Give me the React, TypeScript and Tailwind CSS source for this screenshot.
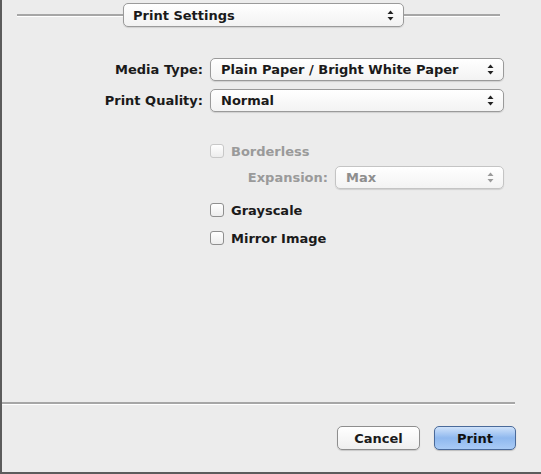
import React from "react";

const font = { fontFamily: '"DejaVu Sans", "Liberation Sans", sans-serif' };

function Arrows({ dim = false }: { dim?: boolean }) {
  const c = dim ? "#9a9a9a" : "#222";
  return (
    <svg width="7" height="11" viewBox="0 0 7 11" className="shrink-0">
      <path d="M3.5 0.5 L6.5 4 L0.5 4 Z" fill={c} />
      <path d="M3.5 10.5 L6.5 7 L0.5 7 Z" fill={c} />
    </svg>
  );
}

function Popup({
  label,
  w,
  dim = false,
}: {
  label: string;
  w: string;
  dim?: boolean;
}) {
  return (
    <div
      className={`${w} h-[23px] flex items-center justify-between pl-[10px] pr-[9px] rounded-[5px] border bg-gradient-to-b from-white to-[#f3f3f3] shadow-[0_1px_1px_rgba(0,0,0,0.12)] ${
        dim ? "border-[#c4c4c4] text-[#8e8e8e]" : "border-[#9a9a9a] text-[#1a1a1a]"
      }`}
    >
      <span className="text-[13px] font-bold leading-none">{label}</span>
      <Arrows dim={dim} />
    </div>
  );
}

function Check({ label, dim = false }: { label: string; dim?: boolean }) {
  return (
    <div className="flex items-center h-[16px]">
      <div
        className={`w-[14px] h-[14px] rounded-[3px] border bg-gradient-to-b from-white to-[#ededed] ${
          dim ? "border-[#c8c8c8]" : "border-[#8f8f8f]"
        }`}
      />
      <span
        className={`ml-[7px] text-[13px] font-bold leading-none ${
          dim ? "text-[#9a9a9a]" : "text-[#1a1a1a]"
        }`}
      >
        {label}
      </span>
    </div>
  );
}

function Groove({ w }: { w: string }) {
  return <div className={`${w} h-[3px] border-t-2 border-[#a6a6a6] border-b border-b-white`} />;
}

export default function App() {
  return (
    <div
      style={font}
      className="w-[541px] h-[474px] bg-[#ececec] border-l-2 border-b-2 border-[#5c5c5c] flex flex-col box-border"
    >
      <div className="flex items-center mt-[3px] h-[24px]">
        <div className="ml-[15px]">
          <Groove w="w-[106px]" />
        </div>
        <div className="w-[281px] h-[24px] flex items-center justify-between pl-[9px] pr-[9px] rounded-[5px] border border-[#9a9a9a] bg-gradient-to-b from-white to-[#f2f2f2] shadow-[0_1px_1px_rgba(0,0,0,0.12)]">
          <span className="text-[13px] font-bold leading-none text-[#1a1a1a]">Print Settings</span>
          <Arrows />
        </div>
        <Groove w="w-[96px]" />
      </div>

      <div className="flex items-center mt-[31px]">
        <div className="w-[201px] text-right text-[13px] font-bold text-[#1a1a1a] leading-none">
          Media Type:
        </div>
        <div className="ml-[7px]">
          <Popup label="Plain Paper / Bright White Paper" w="w-[294px]" />
        </div>
      </div>
      <div className="flex items-center mt-[8px]">
        <div className="w-[201px] text-right text-[13px] font-bold text-[#1a1a1a] leading-none">
          Print Quality:
        </div>
        <div className="ml-[7px]">
          <Popup label="Normal" w="w-[294px]" />
        </div>
      </div>

      <div className="ml-[208px] mt-[31px]">
        <Check label="Borderless" dim />
      </div>
      <div className="flex items-center mt-[7px]">
        <div className="w-[326px] text-right text-[13px] font-bold text-[#9a9a9a] leading-none">
          Expansion:
        </div>
        <div className="ml-[7px]">
          <Popup label="Max" w="w-[169px]" dim />
        </div>
      </div>
      <div className="ml-[208px] mt-[13px]">
        <Check label="Grayscale" />
      </div>
      <div className="ml-[208px] mt-[12px]">
        <Check label="Mirror Image" />
      </div>

      <div className="mt-[156px]">
        <Groove w="w-[513px]" />
      </div>

      <div className="flex mt-[21px] ml-[335px]">
        <div className="w-[83px] h-[24px] rounded-[5px] border border-[#8e8e8e] bg-gradient-to-b from-white to-[#efefef] shadow-[0_1px_1px_rgba(0,0,0,0.15)] flex items-center justify-center text-[13px] font-bold text-[#1a1a1a] leading-none">
          Cancel
        </div>
        <div className="ml-[14px] w-[82px] h-[24px] rounded-[5px] border border-[#4a6a9a] bg-gradient-to-b from-[#cfe2fa] via-[#8fb8ee] to-[#a9cbf6] shadow-[0_1px_1px_rgba(0,0,0,0.2)] flex items-center justify-center text-[13px] font-bold text-[#111] leading-none">
          Print
        </div>
      </div>
    </div>
  );
}
